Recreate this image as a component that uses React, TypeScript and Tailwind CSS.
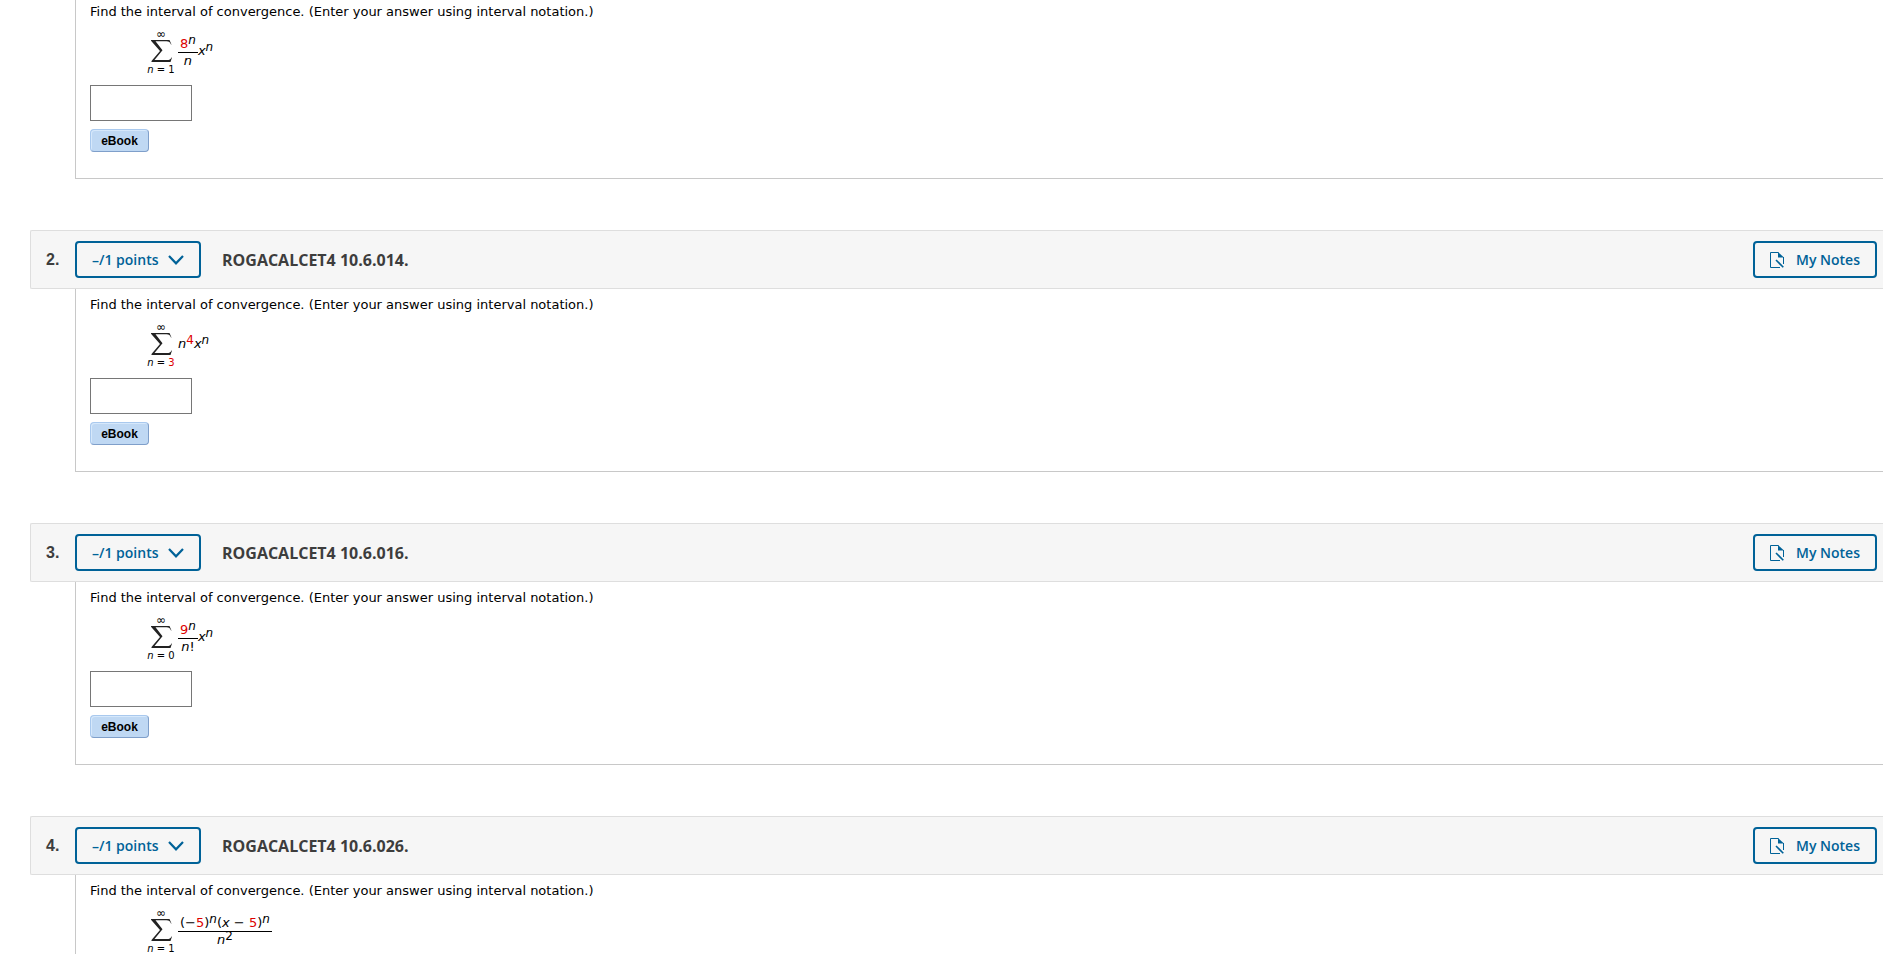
import React from "react";

type Question = {
  number: number;
  code: string;
  start: React.ReactNode;
  term: React.ReactNode;
};

const Red = ({ children }: { children: React.ReactNode }) => (
  <span className="text-[#dd0000]">{children}</span>
);

const Sup = ({ children }: { children: React.ReactNode }) => (
  <sup className="-top-1 text-xs leading-none">{children}</sup>
);

const Fraction = ({ top, bottom }: { top: React.ReactNode; bottom: React.ReactNode }) => (
  <span className="mt-1 inline-flex flex-col items-center leading-4">
    <span className="h-[17px] border-b border-black px-0.5">{top}</span>
    <span className="h-4">{bottom}</span>
  </span>
);

const questions: Question[] = [
  {
    number: 1,
    code: "ROGACALCET4 10.6.012.",
    start: "1",
    term: (
      <>
        <Fraction top={<><Red>8</Red><Sup><i>n</i></Sup></>} bottom={<i>n</i>} />
        <span><i>x</i><Sup><i>n</i></Sup></span>
      </>
    ),
  },
  {
    number: 2,
    code: "ROGACALCET4 10.6.014.",
    start: <Red>3</Red>,
    term: (
      <span><i>n</i><Sup><Red>4</Red></Sup><i>x</i><Sup><i>n</i></Sup></span>
    ),
  },
  {
    number: 3,
    code: "ROGACALCET4 10.6.016.",
    start: "0",
    term: (
      <>
        <Fraction top={<><Red>9</Red><Sup><i>n</i></Sup></>} bottom={<><i>n</i>!</>} />
        <span><i>x</i><Sup><i>n</i></Sup></span>
      </>
    ),
  },
  {
    number: 4,
    code: "ROGACALCET4 10.6.026.",
    start: "1",
    term: (
      <Fraction
        top={<>(−<Red>5</Red>)<Sup><i>n</i></Sup>(<i>x</i> − <Red>5</Red>)<Sup><i>n</i></Sup></>}
        bottom={<><i>n</i><Sup>2</Sup></>}
      />
    ),
  },
];

function Chevron() {
  return (
    <svg width="16" height="10" viewBox="0 0 16 10" fill="none" stroke="currentColor" strokeWidth="2.200" aria-hidden="true">
      <path d="M1 1L8 8.300L15 1" />
    </svg>
  );
}

function NotesIcon() {
  return (
    <svg width="14" height="16" viewBox="0 0 14 16" fill="none" stroke="currentColor" aria-hidden="true">
      <path d="M10 15.500H.5V.5H8.500M13.500 5V12" />
      <path d="M8 0L14 5.500H8Z" fill="currentColor" stroke="none" />
      <path d="M6 8L13.300 15.300" strokeWidth="1.600" />
    </svg>
  );
}

function Sum({ start }: { start: React.ReactNode }) {
  return (
    <span className="flex w-[34px] flex-col items-center gap-0.5">
      <span className="text-xs leading-2">∞</span>
      <svg width="21" height="22" viewBox="0 0 21 22" aria-hidden="true">
        <path d="M0 0H18.500L20.500 4.500H20C19 2 18 1.300 15.500 1.300H4.500L11.500 10.300L3.500 20H16C18.500 20 19.500 19.500 20.500 17.500H21L19.500 22H0.500V21L9 11L0 0.700Z" fill="#222" />
      </svg>
      <span className="whitespace-nowrap text-[10px] leading-3"><i>n</i> = {start}</span>
    </span>
  );
}

function QuestionHeader({ number, code }: { number: number; code: string }) {
  return (
    <header className="ml-[30px] flex h-[59px] items-center rounded-l-xs border-y border-l border-[#dedede] bg-[#f6f6f6] pr-1.5 font-['Open_Sans',sans-serif]">
      <span className="w-11 pl-[15px] font-['Liberation_Sans',sans-serif] text-base font-bold text-[#3d3d3d]">{number}.</span>
      <button className="flex h-[37px] w-[126px] items-center justify-between rounded border-2 border-[#006298] px-[15px] text-sm font-semibold text-[#006298]">
        –/1 points
        <Chevron />
      </button>
      <h2 className="ml-[21px] text-base font-bold text-[#3d3d3d]">{code}</h2>
      <button className="ml-auto flex h-[37px] w-[124px] items-center justify-center gap-3 rounded border-2 border-[#006298] text-sm font-semibold text-[#006298]">
        <NotesIcon />
        My Notes
      </button>
    </header>
  );
}

function QuestionBody({ number, start, term }: Question) {
  return (
    <div className="ml-[75px] border-b border-l border-[#c8c8c8] pt-1.5 pb-[26px] pl-[14px] text-[13px]">
      <p className="leading-5">
        <label htmlFor={`answer-${number}`}>
          Find the interval of convergence. (Enter your answer using interval notation.)
        </label>
      </p>
      <div className="mt-2 ml-[54px] flex h-[45px] items-start">
        <Sum start={start} />
        <span className="flex h-[41px] items-center">{term}</span>
      </div>
      <input
        id={`answer-${number}`}
        type="text"
        className="mt-[10px] block h-9 w-[102px] border border-[#767676] bg-white px-2 outline-none"
      />
      <button className="mt-2 block h-[23px] w-[59px] rounded border border-[#a9c9ee] border-r-[#7f9fca] border-b-[#7f9fca] bg-[#bfd8f3] font-['Liberation_Sans',sans-serif] text-xs font-bold inset-shadow-[1px_1px_0_#d6e8fb]">
        eBook
      </button>
    </div>
  );
}

export default function App() {
  return (
    <main className="h-screen overflow-hidden bg-white font-['DejaVu_Sans',sans-serif] text-black">
      {questions.map((q, i) => (
        <section key={q.number} className="mb-[51px] first:-mt-1">
          {i > 0 && <QuestionHeader number={q.number} code={q.code} />}
          <QuestionBody {...q} />
        </section>
      ))}
    </main>
  );
}
